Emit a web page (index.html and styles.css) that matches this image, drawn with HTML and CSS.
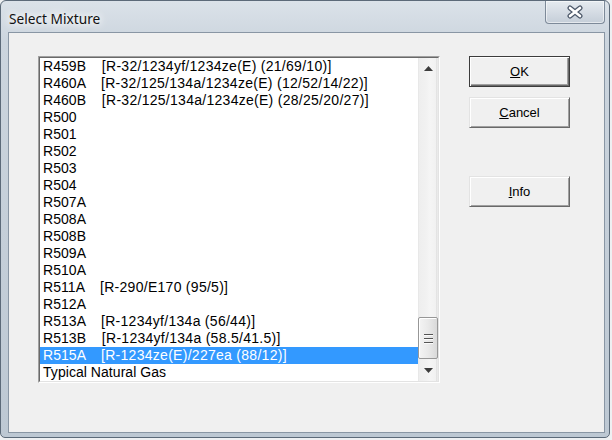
FILE: index.html
```html
<!DOCTYPE html>
<html>
<head>
<meta charset="utf-8">
<title>Select Mixture</title>
<link rel="stylesheet" href="styles.css">
</head>
<body>
<div class="window">
  <div class="titlebar">
    <span class="title">Select Mixture</span>
    <div class="close">
      <svg width="18" height="14" viewBox="0 0 18 14">
        <path d="M4 3 L14 11 M14 3 L4 11" stroke="#4b5768" stroke-width="5" stroke-linecap="round" fill="none"/>
        <path d="M4 3 L14 11 M14 3 L4 11" stroke="#ffffff" stroke-width="2.6" stroke-linecap="round" fill="none"/>
      </svg>
    </div>
  </div>
  <div class="client">
    <div class="listbox">
      <div class="listbox-inner">
        <div class="items">
          <div class="item">R459B    <span class="desc">[R-32/1234yf/1234ze(E) (21/69/10)]</span></div>
          <div class="item">R460A    <span class="desc">[R-32/125/134a/1234ze(E) (12/52/14/22)]</span></div>
          <div class="item">R460B    <span class="desc">[R-32/125/134a/1234ze(E) (28/25/20/27)]</span></div>
          <div class="item">R500</div>
          <div class="item">R501</div>
          <div class="item">R502</div>
          <div class="item">R503</div>
          <div class="item">R504</div>
          <div class="item">R507A</div>
          <div class="item">R508A</div>
          <div class="item">R508B</div>
          <div class="item">R509A</div>
          <div class="item">R510A</div>
          <div class="item">R511A    <span class="desc">[R-290/E170 (95/5)]</span></div>
          <div class="item">R512A</div>
          <div class="item">R513A    <span class="desc">[R-1234yf/134a (56/44)]</span></div>
          <div class="item">R513B    <span class="desc">[R-1234yf/134a (58.5/41.5)]</span></div>
          <div class="item sel">R515A    <span class="desc">[R-1234ze(E)/227ea (88/12)]</span></div>
          <div class="item">Typical Natural Gas</div>
        </div>
        <div class="scrollbar">
          <div class="sb-btn up">
            <svg width="9" height="5" viewBox="0 0 9 5"><polygon points="0,5 4.5,0 9,5" fill="#3c3c3c"/></svg>
          </div>
          <div class="sb-track">
            <div class="thumb">
              <span class="grip"></span>
              <span class="grip"></span>
              <span class="grip"></span>
            </div>
          </div>
          <div class="sb-btn down">
            <svg width="9" height="5" viewBox="0 0 9 5"><polygon points="0,0 9,0 4.5,5" fill="#3c3c3c"/></svg>
          </div>
        </div>
      </div>
    </div>
    <div class="buttons">
      <button class="btn default"><u>O</u>K</button>
      <button class="btn cancel"><u>C</u>ancel</button>
      <button class="btn info"><u>I</u>nfo</button>
    </div>
  </div>
</div>
</body>
</html>
```
FILE: styles.css
```css
html, body {
  margin: 0;
  padding: 0;
}
body {
  width: 612px;
  height: 440px;
  overflow: hidden;
  background: #eef0f2;
  font-family: "Liberation Sans", Arial, sans-serif;
}
.window {
  width: 610px;
  height: 438px;
  box-sizing: border-box;
  border: 1px solid #5c6a79;
  border-radius: 6px 6px 5px 5px;
  background: linear-gradient(#dbe2e9 0px, #ccd5de 40px, #bdc8d3 100%);
  display: flex;
  flex-direction: column;
  padding: 0 4px 4px 7px;
}
.titlebar {
  height: 31px;
  flex: none;
  display: flex;
  align-items: flex-start;
}
.title {
  font-family: "Noto Sans", "Open Sans", sans-serif;
  font-size: 13.7px;
  line-height: 18px;
  padding-top: 9px;
  padding-left: 1px;
  color: #111;
  text-shadow: 0 0 6px #fff, 0 0 10px #fff, 0 0 14px #fff;
}
.close {
  margin-left: auto;
  width: 60px;
  height: 23px;
  box-sizing: border-box;
  border: 1px solid #7d8a99;
  border-top: none;
  border-radius: 0 0 4px 4px;
  background: linear-gradient(#e6ebf0, #d5dce4 50%, #c5ced8);
  box-shadow: inset 0 0 0 1px rgba(255, 255, 255, 0.55);
  display: flex;
  align-items: center;
  justify-content: center;
}
.client {
  flex: 1;
  background: #f0f0f0;
  border: 1px solid #8996a4;
  display: flex;
  align-items: flex-start;
  padding: 23px 0 0 29px;
  gap: 29px;
}
.listbox {
  border: 1px solid;
  border-color: #a0a0a0 #ffffff #ffffff #a0a0a0;
}
.listbox-inner {
  border: 1px solid;
  border-color: #696969 #e3e3e3 #e3e3e3 #696969;
  background: #fff;
  display: flex;
}
.items {
  width: 378px;
}
.item {
  height: 17px;
  line-height: 17px;
  font-size: 14px;
  padding-left: 3px;
  white-space: pre;
  color: #000;
  letter-spacing: 0.05px;
}
.desc {
  letter-spacing: 0.28px;
}
.item.sel {
  background: #3399ff;
  color: #fff;
}
.scrollbar {
  width: 20px;
  display: flex;
  flex-direction: column;
  background: linear-gradient(to right, #e2e2e2 0px, #eeeeee 1px, #f1f1f1 8px, #f5f5f5 12px, #f1f1f1 18px, #d6d6d6 19px, #ffffff 20px);
}
.sb-btn {
  height: 17px;
  box-sizing: border-box;
  display: flex;
  justify-content: center;
  align-items: flex-start;
}
.sb-btn svg {
  display: block;
}
.sb-btn.up {
  padding-top: 8px;
}
.sb-btn.down {
  padding-top: 4px;
}
.sb-track {
  flex: 1;
  display: flex;
  flex-direction: column;
}
.thumb {
  margin-top: auto;
  margin-bottom: 5px;
  height: 42px;
  box-sizing: border-box;
  border: 1px solid #979797;
  border-radius: 2px;
  background: linear-gradient(to right, #f4f4f4, #e9e9e9 50%, #d9d9d9);
  box-shadow: inset 1px 1px #ffffff;
  display: flex;
  flex-direction: column;
  align-items: center;
  justify-content: center;
  gap: 3px;
}
.grip {
  display: block;
  width: 9px;
  height: 1px;
  background: #555;
  box-shadow: 0 1px #fbfbfb;
}
.buttons {
  display: flex;
  flex-direction: column;
}
.btn {
  width: 101px;
  height: 31px;
  box-sizing: border-box;
  margin: 0;
  padding: 0;
  font-family: "Liberation Sans", Arial, sans-serif;
  font-size: 13px;
  color: #000;
  background: #f0f0f0;
  border: 1px solid;
  border-color: #e3e3e3 #696969 #696969 #e3e3e3;
  box-shadow: inset 1px 1px #ffffff, inset -1px -1px #a0a0a0;
  border-radius: 0;
}
.btn.default {
  border: 1px solid #3c3c3c;
  box-shadow: inset 1px 1px #ffffff, inset -1px -1px #696969, inset -2px -2px #a0a0a0;
}
.btn.cancel {
  margin-top: 10px;
}
.btn.info {
  margin-top: 48px;
}
```
